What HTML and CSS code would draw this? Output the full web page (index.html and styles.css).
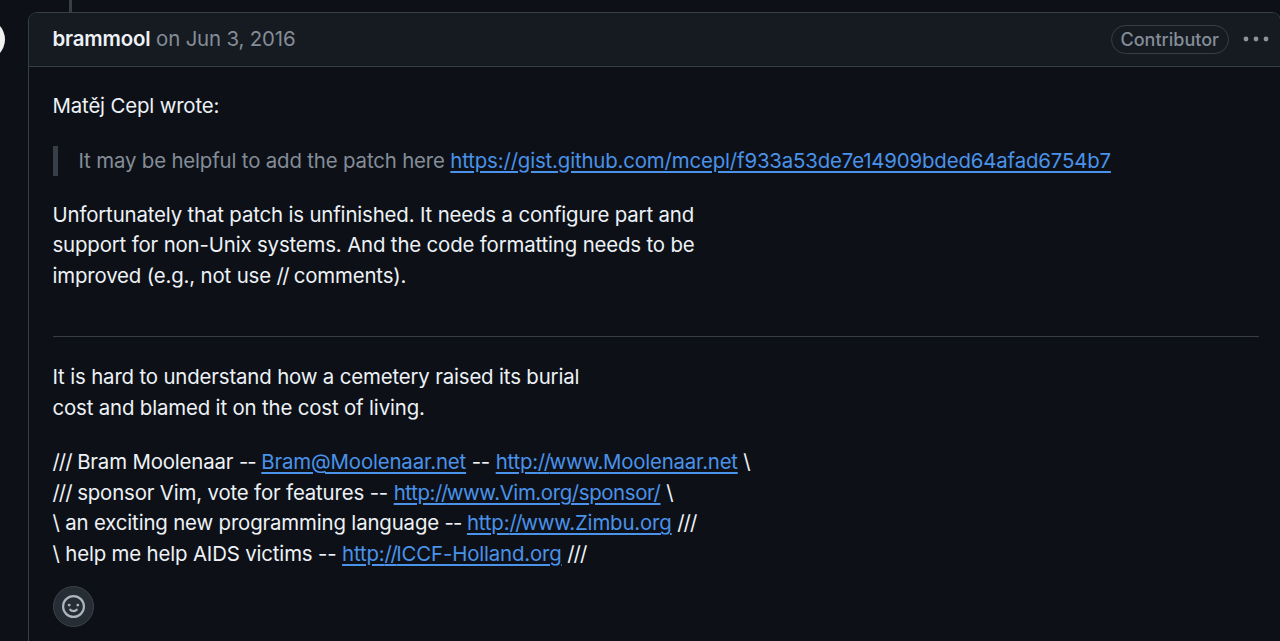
FILE: index.html
```html
<!DOCTYPE html>
<html lang="en">
<head>
<meta charset="utf-8">
<title>Comment</title>
<link rel="stylesheet" href="styles.css">
</head>
<body>
<div class="timeline-line"></div>
<div class="avatar"></div>
<article class="card">
  <header class="card-head">
    <div class="meta"><span class="author">brammool</span> <span class="date">on Jun 3, 2016</span></div>
    <div class="actions">
      <span class="badge">Contributor</span>
      <svg class="kebab" width="26" height="6" viewBox="0 0 26 6"><circle cx="3" cy="3" r="2.4"/><circle cx="13" cy="3" r="2.4"/><circle cx="23" cy="3" r="2.4"/></svg>
    </div>
  </header>
  <div class="body">
    <p>Matěj Cepl wrote:</p>
    <blockquote>It may be helpful to add the patch here <a href="#">https://gist.github.com/mcepl/f933a53de7e14909bded64afad6754b7</a></blockquote>
    <p>Unfortunately that patch is unfinished. It needs a configure part and<br>support for non-Unix systems. And the code formatting needs to be<br>improved (e.g., not use <span class="slashes">//</span> comments).</p>
    <hr>
    <p>It is hard to understand how a cemetery raised its burial<br>cost and blamed it on the cost of living.</p>
    <p class="signature"><span class="slashes3">///</span> Bram Moolenaar <span class="dash">--</span> <a href="#">Bram@Moolenaar.net</a> -- <a class="narrow-sm" href="#">http:<span class="slashes">//</span>www.Moolenaar.net</a> \<br><span class="slashes3">///</span> sponsor Vim, vote for features -- <a class="narrow" href="#">http:<span class="slashes">//</span>www.Vim.org/sponsor/</a> \<br>\ an exciting new programming language <span class="dash">--</span> <a href="#">http:<span class="slashes">//</span>www.Zimbu.org</a> <span class="slashes3">///</span><br>\ help me help AIDS victims -- <a href="#">http:<span class="slashes">//</span>ICCF-Holland.org</a> <span class="slashes3">///</span></p>
    <button class="react" type="button" aria-label="React">
      <svg width="23" height="23" viewBox="0 0 16 16"><path d="M8 0a8 8 0 1 1 0 16A8 8 0 0 1 8 0ZM1.5 8a6.5 6.5 0 1 0 13 0 6.5 6.5 0 0 0-13 0Zm3.82 1.636a.75.75 0 0 1 1.038.175l.007.009c.103.118.22.222.35.31.264.178.683.37 1.285.37.602 0 1.02-.192 1.285-.371.13-.088.247-.192.35-.31l.007-.008a.75.75 0 0 1 1.222.87l-.022-.015c.02.013.021.015.021.015v.001l-.001.002-.002.003-.005.007-.014.019a2.066 2.066 0 0 1-.184.213c-.16.166-.338.316-.53.445-.63.418-1.37.638-2.127.629-.946 0-1.652-.308-2.126-.63a3.331 3.331 0 0 1-.715-.657l-.014-.02-.005-.006-.002-.003v-.002h-.001l.613-.432-.614.43a.75.75 0 0 1 .183-1.044ZM12 7a1 1 0 1 1-2 0 1 1 0 0 1 2 0ZM5 8a1 1 0 1 1 0-2 1 1 0 0 1 0 2Zm5.25 2.25.592.416a97.71 97.71 0 0 0-.592-.416Z"/></svg>
    </button>
  </div>
</article>
</body>
</html>
```
FILE: styles.css
```css
* { box-sizing: border-box; }
html, body { margin: 0; height: 100%; }
body {
  background: #0d1117;
  color: #eef2f7;
  font-family: Inter, "Liberation Sans", sans-serif;
  font-size: 20.4px;
  letter-spacing: -0.155px;
  line-height: 30.6px;
  overflow: hidden;
  padding: 12px 0 0 28px;
}
.timeline-line {
  position: absolute;
  left: 69px;
  top: 0;
  width: 3px;
  height: 12px;
  background: #373e47;
}
.avatar {
  position: absolute;
  left: -36px;
  top: 19px;
  width: 41px;
  height: 41px;
  border-radius: 50%;
  background: #f0f0f0;
}
.card {
  width: 1253px;
  height: 100vh;
  border: 1.5px solid #373e47;
  border-bottom: 0;
  border-radius: 9px 9px 0 0;
}
.card-head {
  height: 53.5px;
  background: #161b22;
  border-bottom: 1.5px solid #373e47;
  border-radius: 8px 8px 0 0;
  display: flex;
  align-items: center;
  justify-content: space-between;
  padding: 0 11px 0 23.5px;
}
.author { font-weight: 600; }
.date { color: #848d97; }
.actions { display: flex; align-items: center; gap: 14px; }
.badge {
  border: 1.5px solid #373e47;
  border-radius: 15px;
  height: 29px;
  padding: 0 9px;
  color: #848d97;
  font-size: 18px;
  font-weight: 500;
  letter-spacing: 0;
  line-height: 27px;
}
.kebab { fill: #8b949e; display: block; }
.body { padding: 24.5px 21.5px 0 23.5px; }
p { margin: 0 0 24px; }
.signature { margin-bottom: 16px; }
.slashes { letter-spacing: -1.5px; }
.slashes3 { letter-spacing: -1px; }
.dash { letter-spacing: -1px; }
.narrow { letter-spacing: -0.38px; }
.narrow-sm { letter-spacing: -0.22px; }
blockquote {
  margin: 0 0 23.4px;
  padding: 0 0 0 21px;
  border-left: 5px solid #373e47;
  color: #848d97;
}
a {
  color: #4a92ea;
  text-decoration: underline;
  text-underline-offset: 3px;
  text-decoration-thickness: 1.5px;
}
hr {
  height: 1.5px;
  margin: 44.6px 0 24.6px;
  background: #373e47;
  border: 0;
}
.react {
  display: flex;
  align-items: center;
  justify-content: center;
  width: 41px;
  height: 41px;
  padding: 0;
  background: #272d35;
  border: 1.5px solid #3b424b;
  border-radius: 50%;
}
.react svg { fill: #adb5be; }
```
